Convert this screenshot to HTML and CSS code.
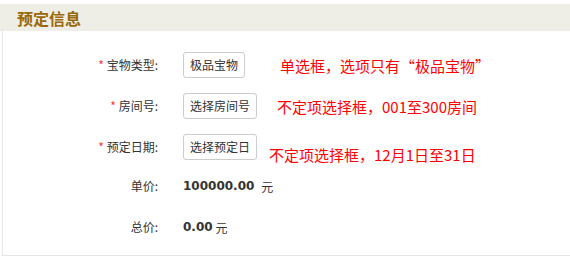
FILE: index.html
```html
<!DOCTYPE html>
<html lang="zh-CN">
<head>
<meta charset="utf-8">
<title>预定信息</title>
<link rel="stylesheet" href="styles.css">
</head>
<body>
<div class="panel">
  <div class="panel-head"><h2 class="panel-title">预定信息</h2></div>
  <div class="panel-body">
    <div class="row">
      <div class="label"><span class="req">*</span> 宝物类型:</div>
      <div class="field">
        <span class="select select-sm">极品宝物</span>
        <span class="note note-1">单选框，选项只有“极品宝物”</span>
      </div>
    </div>
    <div class="row">
      <div class="label"><span class="req">*</span> 房间号:</div>
      <div class="field">
        <span class="select">选择房间号</span>
        <span class="note note-2">不定项选择框，001至300房间</span>
      </div>
    </div>
    <div class="row">
      <div class="label"><span class="req">*</span> 预定日期:</div>
      <div class="field">
        <span class="select">选择预定日</span>
        <span class="note note-3">不定项选择框，12月1日至31日</span>
      </div>
    </div>
    <div class="row row-price">
      <div class="label">单价:</div>
      <div class="field"><span class="num">100000.00</span><span class="unit unit-wide">元</span></div>
    </div>
    <div class="row row-total">
      <div class="label">总价:</div>
      <div class="field"><span class="num">0.00</span><span class="unit">元</span></div>
    </div>
  </div>
</div>
</body>
</html>
```
FILE: styles.css
```css
html, body {
  margin: 0;
  padding: 0;
  background: #fff;
}
body {
  font-family: "Noto Sans CJK SC", "Noto Sans", sans-serif;
  font-size: 12px;
  color: #333;
}
.panel {
  padding-top: 4px;
}
.panel-head {
  height: 27px;
  background: #eeeee6;
  display: flex;
  align-items: center;
  padding-left: 17px;
}
.panel-title {
  margin: 0;
  font-size: 16px;
  font-weight: bold;
  color: #99690a;
  line-height: 1;
}
.panel-body {
  margin-left: 2px;
  border-left: 1px solid #e6e6e6;
  border-bottom: 1px solid #e6e6e6;
  padding: 21px 0 15px 0;
  display: flex;
  flex-direction: column;
  gap: 15px;
}
.row {
  display: flex;
  align-items: center;
  height: 26px;
}
.row-price {
  margin-top: -2px;
}
.label {
  width: 155px;
  text-align: right;
  flex: none;
  font-size: 12px;
  color: #333;
  line-height: 26px;
}
.req {
  color: #f33;
  font-size: 12px;
}
.field {
  margin-left: 25px;
  display: flex;
  align-items: center;
  height: 26px;
}
.select {
  box-sizing: border-box;
  display: inline-block;
  height: 26px;
  width: 74px;
  padding: 0 6px;
  border: 1px solid #ccc;
  border-radius: 3px;
  font-size: 12px;
  line-height: 24px;
  color: #333;
  white-space: nowrap;
}
.select-sm {
  width: 62px;
}
.note {
  color: #ff0000;
  font-size: 15px;
  white-space: nowrap;
}
.note-1 { margin-left: 35px; }
.note-2 { margin-left: 20px; }
.note-3 { margin-left: 12px; margin-top: 14px; }
.num {
  font-family: "DejaVu Sans", sans-serif;
  font-weight: bold;
  font-size: 12px;
  color: #333;
}
.unit {
  font-size: 12px;
  margin-left: 3px;
}
.unit-wide {
  margin-left: 7px;
}
```
